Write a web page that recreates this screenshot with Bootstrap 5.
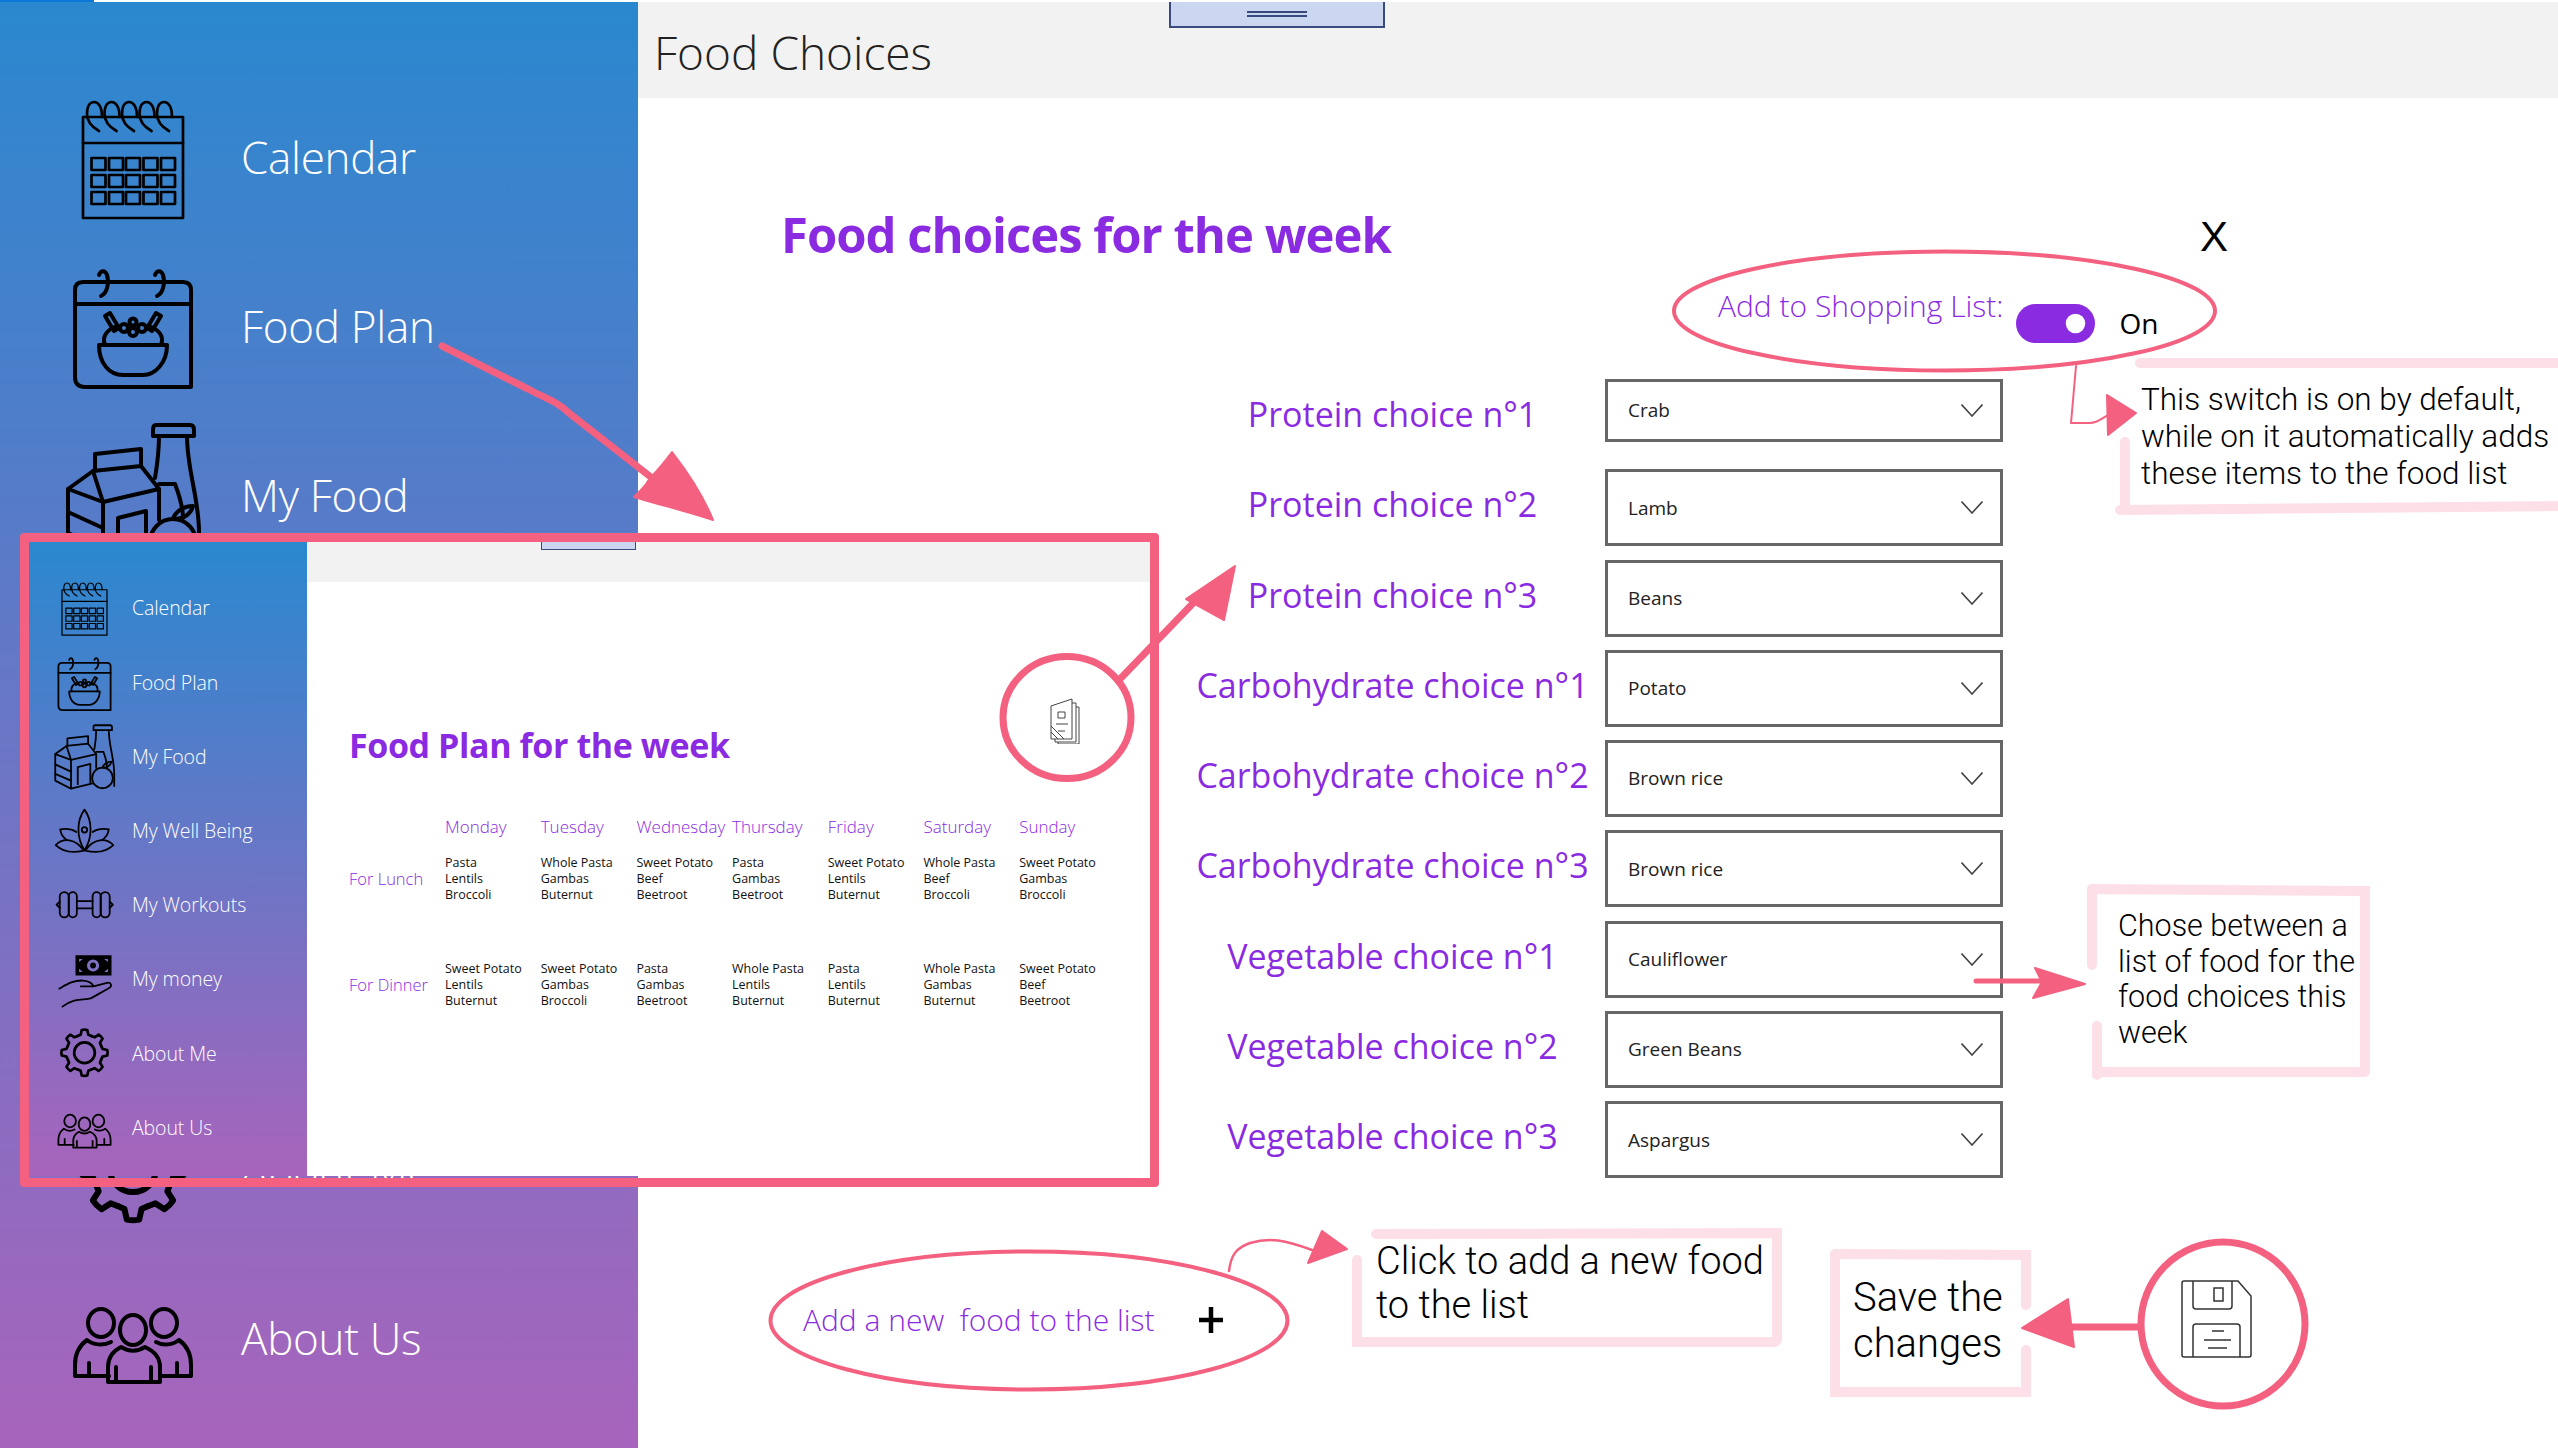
<!DOCTYPE html>
<html lang="en">
<head>
    <meta charset="UTF-8">
    <meta name="viewport" content="width=device-width, initial-scale=1.0">
    <title>Food Choices</title>
    <link href="https://cdn.jsdelivr.net/npm/bootstrap@5.3.0/dist/css/bootstrap.min.css" rel="stylesheet">
    <style>
        :root { --violet: #8a2be2; --coral: #f4607f; --blush: #fddfe7; }
        html, body { width: 2558px; height: 1448px; overflow: hidden; background: #fff; }
        body { position: relative; font-family: "Open Sans", "Liberation Sans", sans-serif; font-weight: 300; }
        .load-strip { height: 2px; }
        .load-strip span { display: block; width: 94px; height: 2px; background: #0a78d7; }
        .page-wrap { height: 1446px; }

        /* sidebar */
        .side-pane { background: linear-gradient(180deg, #2a88cf 0%, #a864bc 100%); }
        .side-pane.big { width: 638px; padding-top: 71px; }
        .side-pane.tiny { width: 278px; padding-top: 29px; }
        .side-item { color: #fff; text-decoration: none; }
        .big .side-item { height: 168.7px; padding-left: 63px; font-size: 44px; letter-spacing: -.3px; }
        .big .side-item svg { width: 140px; height: 150px; margin-right: 38px; }
        .tiny .side-item { height: 74.2px; padding-left: 24px; font-size: 19.500px; letter-spacing: -.1px; }
        .tiny .side-item svg { width: 63px; height: 67.5px; margin-right: 16px; }
        .ico { fill: none; stroke: #000; stroke-width: 4; stroke-linejoin: round; stroke-linecap: round; }

        /* main */
        .head-bar { height: 96px; background: #f2f2f2; padding-left: 16px; padding-top: 20px; font-size: 46px; line-height: 60px; color: #222; }
        .grip { position: absolute; left: 531px; top: 0; width: 216px; height: 26px; background: #cbd6f0; border: 2px solid #3a4a7d; border-top: 0; }
        .grip i { display: block; width: 60px; height: 6px; border-top: 2px solid #3a4a7d; border-bottom: 2px solid #3a4a7d; }
        .main-pane { position: relative; }
        .food-title { font-size: 49px; font-weight: 700; color: var(--violet); line-height: 60px; margin: 0; letter-spacing: -1px; }
        .title-row { width: 1447px; margin-left: 143px; margin-top: 106px; }
        .close-x { font-family: "Liberation Sans", sans-serif; font-size: 42px; font-weight: 400; line-height: 60px; color: #000; padding-top: 3px; }
        .switch-row { margin-left: 1080px; height: 52px; margin-top: 30px; }
        .switch-row label { font-size: 30px; line-height: 40px; color: var(--violet); margin-right: 12px; margin-top: -35px; white-space: nowrap; }
        .switch-row .form-switch { min-height: 0; padding: 0; margin: 0; }
        .switch-row .form-check-input { width: 79px; height: 39px; margin: 0; border: 0; background-color: var(--violet);
            background-image: url("data:image/svg+xml,%3csvg xmlns='http://www.w3.org/2000/svg' viewBox='-4 -4 8 8'%3e%3ccircle r='2' fill='%23fff'/%3e%3c/svg%3e"); }
        .switch-row .on-word { margin-left: 25px; font-size: 28px; font-weight: 400; color: #000; }
        .choice-list { margin-left: 542px; margin-top: 30px; row-gap: 13.3px; }
        .choice-row { height: 77px; }
        .choice-row label { width: 425px; text-align: center; font-size: 34px; font-weight: 400; margin-bottom: 6px; color: var(--violet); white-space: nowrap; }
        .choice-row .form-select { width: 398px; height: 77px; border: 3px solid #666; border-radius: 0; padding: 0 50px 0 20px; font-size: 19px; font-weight: 400; color: #222;
            font-family: "Open Sans", sans-serif;
            background-image: url("data:image/svg+xml,%3csvg xmlns='http://www.w3.org/2000/svg' viewBox='0 0 22 13'%3e%3cpath fill='none' stroke='%23444' stroke-width='1.6' d='M.5.5 11 12 21.500.5'/%3e%3c/svg%3e");
            background-size: 22px 13px; background-position: right 17px center; }
        .choice-row .form-select.short { height: 63px; }
        .add-row { margin-left: 165px; margin-top: 119px; font-size: 30px; color: var(--violet); }
        .add-row .btn { padding: 0; border: 0; margin-left: 44px; line-height: 1; }

        /* notes */
        .side-note { position: absolute; font-family: "Roboto", "Liberation Sans", sans-serif; font-weight: 300; color: #000; white-space: nowrap; }
        .note-a { left: 2141px; top: 381px; font-size: 31.500px; line-height: 37px; }
        .note-b { left: 2118px; top: 908px; font-size: 30.500px; line-height: 35.500px; }
        .note-c { left: 1376px; top: 1239px; font-size: 38px; line-height: 44px; }
        .note-d { left: 1853px; top: 1275px; font-size: 40px; line-height: 46px; }
        .sketch-layer { position: absolute; left: 0; top: 0; width: 2558px; height: 1448px; pointer-events: none; z-index: 5; }

        /* the food plan window shown over the page */
        .plan-window { position: absolute; left: 20px; top: 533px; width: 1139px; height: 654px; border: 9px solid var(--coral); border-radius: 4px; z-index: 3; background: transparent; }
        .plan-inner { height: 634px; }
        .plan-inner .side-pane { height: 634px; }
        .plan-main { background: #fff; position: relative; }
        .plan-head { height: 40px; background: #f2f2f2; }
        .plan-grip { position: absolute; left: 234px; top: 0; width: 95px; height: 8px; background: #cbd6f0; border: 1px solid #3a4a7d; border-top: 0; }
        .plan-title-row { margin: 128px 70px 0 42px; height: 60px; }
        .plan-title { font-size: 34px; font-weight: 700; line-height: 44px; color: var(--violet); margin: 0 0 3px; letter-spacing: -.4px; }
        .plan-menu { margin-bottom: 26px; }
        .plan-grid { display: grid; grid-template-columns: 96px repeat(7, 95.7px); margin: 45px 0 0 42px; align-items: center; }
        .plan-grid .day { font-size: 17px; color: var(--violet); line-height: 24px; margin-bottom: 16px; }
        .plan-grid .meal { font-size: 16.500px; color: var(--violet); white-space: nowrap; }
        .plan-grid .dish { font-size: 12.500px; font-weight: 400; color: #111; line-height: 16px; white-space: nowrap; }
        .plan-grid .dish.gap { margin-top: 58px; }
        .plan-grid .meal.gap { margin-top: 58px; }
    </style>
</head>
<body>
    <div class="load-strip"><span></span></div>

    <svg width="0" height="0" class="position-absolute">
        <defs>
            <g id="cal-cells"><rect x="28.500" y="76" width="14" height="12"/><rect x="46" y="76" width="14" height="12"/><rect x="63" y="76" width="14" height="12"/><rect x="80.500" y="76" width="14" height="12"/><rect x="98" y="76" width="14" height="12"/></g>
            <path id="cal-ring" d="M36 49C29 45 24 40 24 32 24 24 27 20 31 20 35 20 39 24 39 35"/>
            <symbol id="i-calendar" viewBox="0 0 140 150">
                <g class="ico" style="stroke-width:2.700">
                    <rect x="20" y="35" width="100" height="101"/><path d="M20 61H120"/>
                    <use href="#cal-cells"/><use href="#cal-cells" y="17"/><use href="#cal-cells" y="34"/>
                    <use href="#cal-ring"/><use href="#cal-ring" x="17.500"/><use href="#cal-ring" x="35"/><use href="#cal-ring" x="52.500"/><use href="#cal-ring" x="70"/>
                </g>
            </symbol>
            <symbol id="i-plan" viewBox="0 0 140 150">
                <g class="ico">
                    <path d="M20 31H120Q128 31 128 39V136H22Q12 136 12 126V39Q12 31 20 31Z"/><path d="M12 53H128"/>
                    <path d="M38 45C45 42 46 30 44 24 42 19 38 19 36 24"/><path d="M94 45C101 42 102 30 100 24 98 19 94 19 92 24"/>
                    <path d="M36 94H104C104 112 92 124 80 124H60C46 124 36 112 36 94Z"/>
                    <path d="M42 94C38 84 46 78 54 75M98 94C102 84 94 78 86 75"/>
                    <path d="M42 65 47 62 56 77 51 80ZM98 65 93 62 84 77 89 80Z"/>
                    <circle cx="61" cy="77" r="4"/><circle cx="79" cy="77" r="4"/><circle cx="70" cy="81" r="4"/><circle cx="70" cy="71" r="3.500"/>
                </g>
            </symbol>
            <symbol id="i-food" viewBox="0 0 140 150">
                <g class="ico">
                    <path d="M93 5H127Q131 5 131 10V16H90V10Q90 5 93 5Z"/>
                    <path d="M96 16C96 32 94 46 92 58M124 16C124 50 136 78 136 112V140"/>
                    <path d="M5 69 30 51 78 46 96 69 40 82Z"/><path d="M32 51V34L78 29V46M30 51 40 82"/>
                    <path d="M5 69V128L40 146 88 134M40 82V146"/><path d="M5 92 40 108M5 113 40 128"/>
                    <path d="M55 136V98L83 91V132"/>
                    <path d="M96 69V100M96 64H112C118 80 120 90 120 98"/>
                    <circle cx="110" cy="122" r="23"/>
                    <path d="M110 99C112 92 120 86 130 86 128 94 120 100 110 99Z"/>
                </g>
            </symbol>
            <symbol id="i-well" viewBox="0 0 140 150">
                <g class="ico">
                    <path d="M70 28C52 52 52 90 70 119 88 90 88 52 70 28Z"/><circle cx="70" cy="73" r="6"/>
                    <path d="M52 78C40 70 28 70 16 72 18 85 24 92 32 96M88 78C100 70 112 70 124 72 122 85 116 92 108 96"/>
                    <path d="M6 107C22 90 50 92 68 119 45 125 22 122 6 107ZM134 107C118 90 90 92 72 119 95 125 118 122 134 107Z"/>
                </g>
            </symbol>
            <symbol id="i-gym" viewBox="0 0 140 150">
                <g class="ico">
                    <rect x="15" y="47" width="20" height="56" rx="10"/><rect x="35" y="47" width="18" height="56" rx="9"/>
                    <rect x="88" y="47" width="18" height="56" rx="9"/><rect x="106" y="47" width="20" height="56" rx="10"/>
                    <path d="M53 67H88M53 83H88M15 68 8 75 15 82M126 68 133 75 126 82"/>
                </g>
            </symbol>
            <symbol id="i-money" viewBox="0 0 140 150">
                <path fill-rule="evenodd" d="M50 23H130V68H50ZM89 32A12 12 0 1 0 89 59 12 12 0 1 0 89 32ZM89 39A6 6 0 1 1 89 52 6 6 0 1 1 89 39ZM58 31 66 31 58 38ZM122 31V38L114 31ZM58 60V53L66 60ZM122 60H114L122 53Z"/>
                <g class="ico"><path d="M14 97C30 88 45 78 66 79 78 80 88 85 90 92H62M90 92 120 84C130 82 132 92 124 96L85 118C70 124 50 115 21 137"/></g>
            </symbol>
            <path id="gear-part" d="M54.700 38Q58 36.500 61.500 34.900L63.800 24.400Q70 23 76.200 24.400L78.500 34.900Q82 36.500 85.300 38"/>
            <symbol id="i-gear" viewBox="0 0 140 150">
                <g class="ico" style="stroke-width:6">
                    <circle cx="70" cy="75" r="23"/>
                    <use href="#gear-part"/><use href="#gear-part" transform="rotate(45 70 75)"/><use href="#gear-part" transform="rotate(90 70 75)"/><use href="#gear-part" transform="rotate(135 70 75)"/>
                    <use href="#gear-part" transform="rotate(180 70 75)"/><use href="#gear-part" transform="rotate(225 70 75)"/><use href="#gear-part" transform="rotate(270 70 75)"/><use href="#gear-part" transform="rotate(315 70 75)"/>
                </g>
            </symbol>
            <symbol id="i-people" viewBox="0 0 140 150">
                <g class="ico">
                    <ellipse cx="38" cy="60" rx="13" ry="14"/><ellipse cx="70" cy="67" rx="13" ry="15"/><ellipse cx="101" cy="60" rx="13" ry="14"/>
                    <path d="M45 119V104C45 94 50 88 58 84 66 89 74 89 82 84 91 88 97 94 97 104V119ZM53 104V119M88 104V119"/>
                    <path d="M46 113H12V102C12 90 17 82 24 77 30 82 40 83 48 79M97 113H128V102C128 90 123 82 116 77 110 82 100 83 93 79M26 100V113M114 100V113"/>
                </g>
            </symbol>
        </defs>
    </svg>

    <div class="page-wrap d-flex">
        <nav class="side-pane big flex-shrink-0">
            <a class="side-item d-flex align-items-center" href="#"><svg><use href="#i-calendar"/></svg>Calendar</a>
            <a class="side-item d-flex align-items-center" href="#"><svg><use href="#i-plan"/></svg>Food Plan</a>
            <a class="side-item d-flex align-items-center" href="#"><svg><use href="#i-food"/></svg>My Food</a>
            <!-- these three rows sit behind the food plan window -->
            <a class="side-item d-flex align-items-center" href="#" aria-label="My Well Being"><svg><use href="#i-well"/></svg></a>
            <a class="side-item d-flex align-items-center" href="#" aria-label="My Workouts"><svg><use href="#i-gym"/></svg></a>
            <a class="side-item d-flex align-items-center" href="#" aria-label="My money"><svg><use href="#i-money"/></svg></a>
            <a class="side-item d-flex align-items-center" href="#"><svg><use href="#i-gear"/></svg>About Me</a>
            <a class="side-item d-flex align-items-center" href="#"><svg><use href="#i-people"/></svg>About Us</a>
        </nav>

        <main class="main-pane flex-grow-1">
            <div class="head-bar">Food Choices</div>
            <div class="grip d-flex align-items-center justify-content-center"><i></i></div>

            <div class="title-row d-flex justify-content-between">
                <h1 class="food-title">Food choices for the week</h1>
                <span class="close-x">X</span>
            </div>

            <div class="switch-row d-flex align-items-center">
                <label for="shopSwitch">Add to Shopping List:</label>
                <div class="form-check form-switch">
                    <input class="form-check-input" type="checkbox" role="switch" id="shopSwitch" checked>
                </div>
                <span class="on-word">On</span>
            </div>

            <form class="choice-list d-flex flex-column">
                <div class="choice-row d-flex align-items-start"><label class="align-self-center">Protein choice n°1</label><select class="form-select short"><option>Crab</option></select></div>
                <div class="choice-row d-flex align-items-center"><label>Protein choice n°2</label><select class="form-select"><option>Lamb</option></select></div>
                <div class="choice-row d-flex align-items-center"><label>Protein choice n°3</label><select class="form-select"><option>Beans</option></select></div>
                <div class="choice-row d-flex align-items-center"><label>Carbohydrate choice n°1</label><select class="form-select"><option>Potato</option></select></div>
                <div class="choice-row d-flex align-items-center"><label>Carbohydrate choice n°2</label><select class="form-select"><option>Brown rice</option></select></div>
                <div class="choice-row d-flex align-items-center"><label>Carbohydrate choice n°3</label><select class="form-select"><option>Brown rice</option></select></div>
                <div class="choice-row d-flex align-items-center"><label>Vegetable choice n°1</label><select class="form-select"><option>Cauliflower</option></select></div>
                <div class="choice-row d-flex align-items-center"><label>Vegetable choice n°2</label><select class="form-select"><option>Green Beans</option></select></div>
                <div class="choice-row d-flex align-items-center"><label>Vegetable choice n°3</label><select class="form-select"><option>Aspargus</option></select></div>
            </form>

            <div class="add-row d-flex align-items-center">
                <span>Add a new&nbsp; food to the list</span>
                <button class="btn" type="button" aria-label="Add"><svg width="24" height="26" viewBox="0 0 24 26"><path d="M12 0V26M0 13H24" stroke="#000" stroke-width="4.500"/></svg></button>
            </div>
        </main>
    </div>

    <!-- Food plan window laid over the page -->
    <section class="plan-window">
        <div class="plan-inner d-flex">
            <nav class="side-pane tiny flex-shrink-0">
                <a class="side-item d-flex align-items-center" href="#"><svg><use href="#i-calendar"/></svg>Calendar</a>
                <a class="side-item d-flex align-items-center" href="#"><svg><use href="#i-plan"/></svg>Food Plan</a>
                <a class="side-item d-flex align-items-center" href="#"><svg><use href="#i-food"/></svg>My Food</a>
                <a class="side-item d-flex align-items-center" href="#"><svg><use href="#i-well"/></svg>My Well Being</a>
                <a class="side-item d-flex align-items-center" href="#"><svg><use href="#i-gym"/></svg>My Workouts</a>
                <a class="side-item d-flex align-items-center" href="#"><svg><use href="#i-money"/></svg>My money</a>
                <a class="side-item d-flex align-items-center" href="#"><svg><use href="#i-gear"/></svg>About Me</a>
                <a class="side-item d-flex align-items-center" href="#"><svg><use href="#i-people"/></svg>About Us</a>
            </nav>
            <div class="plan-main flex-grow-1">
                <div class="plan-head"></div>
                <div class="plan-grip"></div>
                <div class="plan-title-row d-flex justify-content-between align-items-end">
                    <h2 class="plan-title">Food Plan for the week</h2>
                    <svg width="30" height="46" viewBox="0 0 30 46" class="plan-menu" fill="none" stroke="#444" stroke-width="1">
                        <path d="M1 8 22 1V41H1ZM22 5H26V44H5V41M26 9H29V46H8V44"/>
                        <path d="M8 14H15V20H8ZM6 26H18M8 33H15M1 28 14 41M1 34 8 41" />
                    </svg>
                </div>
                <div class="plan-grid">
                    <div class="day"></div><div class="day">Monday</div><div class="day">Tuesday</div><div class="day">Wednesday</div><div class="day">Thursday</div><div class="day">Friday</div><div class="day">Saturday</div><div class="day">Sunday</div>
                    <div class="meal">For Lunch</div>
                    <div class="dish">Pasta<br>Lentils<br>Broccoli</div>
                    <div class="dish">Whole Pasta<br>Gambas<br>Buternut</div>
                    <div class="dish">Sweet Potato<br>Beef<br>Beetroot</div>
                    <div class="dish">Pasta<br>Gambas<br>Beetroot</div>
                    <div class="dish">Sweet Potato<br>Lentils<br>Buternut</div>
                    <div class="dish">Whole Pasta<br>Beef<br>Broccoli</div>
                    <div class="dish">Sweet Potato<br>Gambas<br>Broccoli</div>
                    <div class="meal gap">For Dinner</div>
                    <div class="dish gap">Sweet Potato<br>Lentils<br>Buternut</div>
                    <div class="dish gap">Sweet Potato<br>Gambas<br>Broccoli</div>
                    <div class="dish gap">Pasta<br>Gambas<br>Beetroot</div>
                    <div class="dish gap">Whole Pasta<br>Lentils<br>Buternut</div>
                    <div class="dish gap">Pasta<br>Lentils<br>Buternut</div>
                    <div class="dish gap">Whole Pasta<br>Gambas<br>Buternut</div>
                    <div class="dish gap">Sweet Potato<br>Beef<br>Beetroot</div>
                </div>
            </div>
        </div>
    </section>

    <!-- Hand drawn annotations -->
    <svg class="sketch-layer" viewBox="0 0 2558 1448" fill="none">
        <g stroke="#fddfe7" stroke-width="10" stroke-linecap="round">
            <path d="M2140 363H2558M2125 442V510M2120 510 2558 506"/>
            <path d="M2092 889 2365 891V1072M2092 889V965M2097 1026V1075M2097 1072H2365"/>
            <path d="M1376 1234 1777 1233V1340M1357 1260V1342H1775"/>
            <path d="M1835 1254 2026 1255V1305M1835 1254V1392H2026V1350"/>
        </g>
        <g stroke="#f4607f" stroke-linecap="round" stroke-linejoin="round">
            <ellipse cx="1944.500" cy="311" rx="270.500" ry="59.500" stroke-width="4"/>
            <ellipse cx="1029" cy="1320.500" rx="258.500" ry="69" stroke-width="4"/>
            <ellipse cx="1067" cy="717.500" rx="64" ry="61" stroke-width="7"/>
            <ellipse cx="2223" cy="1324" rx="82" ry="82" stroke-width="7"/>
            <path d="M2076 366 2071 423H2090C2098 423 2102 418 2110 414" stroke-width="2"/>
            <path d="M1229 1271C1231 1255 1236 1248 1250 1243 1270 1237 1285 1240 1312 1250" stroke-width="2.500"/>
            <path d="M442 346 528 389C545 398 558 402 569 413L652 478" stroke-width="7"/>
            <path d="M1121 678 1200 596" stroke-width="7"/>
            <path d="M1976 981H2040" stroke-width="5"/>
            <path d="M2138 1327H2068" stroke-width="7"/>
            <g fill="#f4607f" stroke-width="2">
                <path d="M672 452C686 470 703 495 713 520 690 512 660 505 634 497 640 490 645 488 650 478 660 468 666 460 672 452Z"/>
                <path d="M1235 566 1186 599 1224 620Z"/>
                <path d="M2107 395 2136 413 2108 435Z"/>
                <path d="M1322 1231 1347 1249 1308 1263Z"/>
                <path d="M2035 968 2085 984 2033 998 2042 982Z"/>
                <path d="M2022 1328 2068 1299 2074 1347Z"/>
            </g>
        </g>
        <g stroke="#333" stroke-width="1.500" transform="translate(2181 1280)">
            <path d="M3 1H57L70 16V75Q70 77 68 77H3Q1 77 1 75V3Q1 1 3 1Z"/>
            <path d="M12 1V26Q12 29 15 29H48Q51 29 51 26V1M33 8H42V21H33ZM12 77V47Q12 44 15 44H56Q59 44 59 47V77M31 51H43M23 60H50M27 68H46"/>
        </g>
    </svg>

    <div class="side-note note-a">This switch is on by default,<br>while on it automatically adds<br>these items to the food list</div>
    <div class="side-note note-b">Chose between a<br>list of food for the<br>food choices this<br>week</div>
    <div class="side-note note-c">Click to add a new food<br>to the list</div>
    <div class="side-note note-d">Save the<br>changes</div>

    <script src="https://cdn.jsdelivr.net/npm/bootstrap@5.3.0/dist/js/bootstrap.bundle.min.js"></script>
</body>
</html>
